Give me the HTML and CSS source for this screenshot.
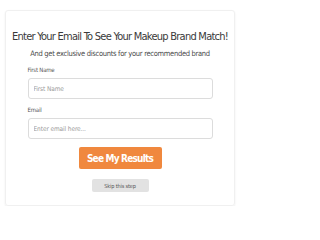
FILE: index.html
```html
<!DOCTYPE html>
<html>
<head>
<meta charset="utf-8">
<link rel="stylesheet" href="styles.css">
</head>
<body>
<div class="card">
  <h1 class="title">Enter Your Email To See Your Makeup Brand Match!</h1>
  <p class="subtitle">And get exclusive discounts for your recommended brand</p>
  <form class="form">
    <label class="label">First Name</label>
    <input class="input" type="text" placeholder="First Name">
    <label class="label">Email</label>
    <input class="input" type="text" placeholder="Enter email here...">
    <button class="cta" type="button">See My Results</button>
    <button class="skip" type="button">Skip this step</button>
  </form>
</div>
</body>
</html>
```
FILE: styles.css
```css
html, body { margin: 0; padding: 0; background: #fff; }
body { font-family: "DejaVu Sans Condensed", "DejaVu Sans", sans-serif; font-stretch: condensed; color: #333; }
.card {
  width: 230px;
  height: 196px;
  margin: 10px 0 0 5px;
  box-sizing: border-box;
  border: 1px solid #f0f0f0;
  border-radius: 3px;
  box-shadow: 0 1px 2px rgba(0,0,0,0.08);
  padding-top: 19px;
  display: flex;
  flex-direction: column;
  align-items: center;
}
.title { margin: 0; font-size: 11px; line-height: 14px; letter-spacing: -0.75px; font-weight: normal; color: #3a3a3a; white-space: nowrap; }
.subtitle { margin: 5px 0 0; font-size: 7.5px; line-height: 10px; letter-spacing: -0.3px; color: #4a4a4a; white-space: nowrap; }
.form { width: 185px; display: flex; flex-direction: column; margin-top: 7px; }
.label { font-size: 6px; line-height: 8px; letter-spacing: -0.2px; color: #555; margin-bottom: 4px; }
.input {
  height: 21px; box-sizing: border-box; border: 1px solid #dcdcdc; border-radius: 3px;
  padding: 0 5px; font-family: inherit; font-size: 6.5px; letter-spacing: -0.1px; margin: 0 0 7px; outline: none;
}
.input::placeholder { color: #9a9a9a; }
.cta {
  align-self: center; margin-top: 1px; width: 83px; height: 22px; border: 0; border-radius: 2px;
  background: #f0883e; color: #fff; font-family: inherit; font-size: 10px; letter-spacing: -0.8px; font-weight: bold; padding: 0;
}
.skip {
  align-self: center; margin-top: 10px; width: 57px; height: 13px; border: 0; border-radius: 2px;
  background: #e2e2e2; color: #555; font-family: inherit; font-size: 5.5px; letter-spacing: -0.15px; padding: 0;
}
```
